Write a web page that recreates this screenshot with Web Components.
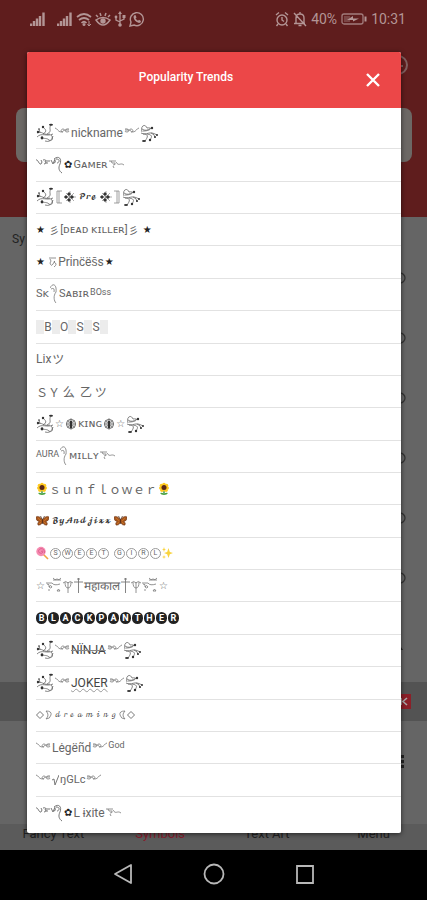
<!DOCTYPE html>
<html lang="en">
<head>
<meta charset="utf-8">
<meta name="viewport" content="width=device-width, initial-scale=1">
<title>Popularity Trends</title>
<style>
body{margin:0;background:#000;font-family:Roboto,"Liberation Sans",sans-serif}
</style>
</head>
<body>
<trends-screen></trends-screen>
<script>
const GLYPHS = {
  swirlLeft: [18,20,'<g fill="none" stroke="#666" stroke-width=".8"><path d="M1 10C5 7 8 13 14 11M1 14C6 9 10 14 17 11M4 10Q3 6 3 6M7 11C12 8 9 6 7 4M11 11C17 8 12 6 15 2M6 13C6 17 10 14 13 17C16 19 18 15 15 12M9 18Q15 20 17 13"/></g><g fill="#333"><circle cx="2" cy="9" r="1.2"/><circle cx="7" cy="4" r="1.2"/><ellipse cx="15" cy="1.8" rx="2" ry="1"/><circle cx="6" cy="15" r="1.4"/><circle cx="3" cy="6" r=".8"/></g>'],
  swirlRight: [18,20,'<g fill="none" stroke="#666" stroke-width=".8"><path d="M2 9C0 3 5 0 7 5C13 4 11 8 3 8M1 10C7 13 9 7 17 12M3 11C9 11 8 14 5 18M7 11C14 12 11 15 10 17M11 10Q15 11 15 15M2 6Q6 9 11 5"/></g><g fill="#333"><ellipse cx="4" cy="18" rx="2" ry="1.1"/><circle cx="10" cy="17" r="1.2"/><circle cx="15" cy="14" r="1"/><circle cx="17" cy="12" r="1"/><circle cx="12" cy="5" r="1.2"/></g>'],
  wingLeft: [15,16,'<g fill="none" stroke="#777" stroke-width=".8"><path d="M0 3C2 3 3 7 6 7C9 7 10 4 8 4C6 4 5 7 8 7M14 4C10 3 9 7 12 7Q14 7 14 6M9 5H14"/></g>'],
  wingRight: [15,16,'<g fill="none" stroke="#777" stroke-width=".8"><path d="M15 3C13 3 12 7 9 7C6 7 5 4 7 4C9 4 10 7 7 7M1 4C5 3 6 7 3 7Q1 7 1 6M6 5H1"/></g>'],
  plume: [27,20,'<g fill="none" stroke="#666" stroke-width=".9"><path d="M0 5C2 4 3 10 5 9Q7 7 5 5M7 5Q11 4 9 7Q12 8 8 9M11 5V9M12 6H14M15 5L17 9L19 4M19 5Q20 8 18 8M18 4C23 0 26 4 24 9C22 13 23 16 26 18M20 4C25 4 23 8 21 8"/></g>'],
  tail: [15,16,'<g fill="none" stroke="#777" stroke-width=".8"><path d="M0 4H7M2 4Q2 7 6 6Q7 8 4 8M4 9L5 11M7 5C10 10 11 5 15 8"/></g>'],
  hook: [8,22,'<g fill="none" stroke="#777" stroke-width=".8"><path d="M0 5C3 -1 7 2 6 9C3 13 4 18 6 20M1 6Q5 4 4 9"/></g>'],
  bracketLeft: [8,16,'<path d="M7 2H2V14H7M4 2V14" fill="none" stroke="#888" stroke-width=".8"/>'],
  bracketRight: [8,16,'<path d="M1 2H6V14H1M4 2V14" fill="none" stroke="#888" stroke-width=".8"/>'],
  burst: [12,14,'<g stroke="#777" stroke-width=".6"><path d="M6 1V13M0 7H12M2 3L10 11M10 3L2 11"/></g><g fill="#333"><path d="M5 2L7 4L5 6L3 4zM5 8L7 10L5 12L3 10zM2 5L4 7L2 9L0 7zM8 5L10 7L8 9L6 7z"/></g>'],
  wheel: [12,14,'<circle cx="6" cy="7" r="4.6" fill="#ccc" stroke="#777"/><path d="M6 1V13M1 7H11M2 3L10 11M10 3L2 11" stroke="#777" stroke-width=".7"/><path d="M6 4V11" stroke="#333" stroke-width="2"/>'],
  om: [8,12,'<path d="M0 2H7M1 3Q3 5 1 7Q2 11 4 8Q7 3 5 6Q9 8 5 11" fill="none" stroke="#777" stroke-width=".8"/>'],
  sunflower: [12,14,'<path d="M6 7V12" stroke="#3a9142" stroke-width="1.4"/><path d="M2 11Q4 10 6 12Q8 10 10 11Q9 13 6 13Q3 13 2 11" fill="#49a33e"/><g fill="#ffc91f"><circle cx="6" cy="2.5" r="1.8"/><circle cx="3.5" cy="3.5" r="1.8"/><circle cx="8.5" cy="3.5" r="1.8"/><circle cx="2.8" cy="6" r="1.8"/><circle cx="9.2" cy="6" r="1.8"/><circle cx="4" cy="8.2" r="1.8"/><circle cx="8" cy="8.2" r="1.8"/></g><circle cx="6" cy="5.6" r="2.5" fill="#5b2816"/>'],
  butterfly: [13,14,'<path d="M6.5 6C4 2 1 2 0 3Q0 7 3 7.5Q1 9 2 11Q5 12 6.5 8Q8 12 11 11Q12 9 10 7.5Q13 7 13 3C12 2 9 2 6.5 6" fill="#a9571d" stroke="#6b3518" stroke-width=".6"/><path d="M2 4L5 7M11 4L8 7M3 10L5 8M10 10L8 8" stroke="#d07d28" stroke-width=".7"/><path d="M6.5 5V10M6 5L4.5 2M7 5L8.5 2" stroke="#402010" stroke-width=".7"/>'],
  lollipop: [13,14,'<path d="M7 8L12 13" stroke="#f1a344" stroke-width="1.6"/><circle cx="5" cy="5.5" r="4.7" fill="#f58bb0"/><path d="M5 5.5Q7 4 7 6Q6 8 3.5 7Q1 4 5 2.5Q9 3 8.5 7" fill="none" stroke="#d95789" stroke-width=".8"/>'],
  sparkles: [11,14,'<g fill="#f9d33c"><path d="M6.5 2L7.8 6L11 7L7.8 8.2L6.5 12L5.2 8.2L2 7L5.2 6z"/><path d="M2 1L2.6 3L4 3.5L2.6 4L2 6L1.4 4L0 3.5L1.4 3zM2 9L2.5 10.5L4 11L2.5 11.5L2 13L1.5 11.5L0 11L1.5 10.5z"/></g>'],
  crest: [16,20,'<g fill="none" stroke="#777" stroke-width=".8"><path d="M0 7H6M1 8Q4 8 3 11Q5 8 6 11Q5 13 3 11M3 13V15M7 2Q9 5 11 3Q13 5 15 2M7 4H15M6 7Q8 10 14 8M11 15L12.5 13L14 15z"/></g>'],
  trident: [10,18,'<path d="M0 6Q3 3 5 6Q7 3 10 6M2 5Q2 11 5 11Q8 11 8 5M5 5V16" fill="none" stroke="#777" stroke-width=".8"/>'],
  dagger: [9,18,'<path d="M4.500 1V16M0 5H9M3 2H6" fill="none" stroke="#777" stroke-width=".9"/>'],
  radical: [7,16,'<path d="M0 8L2 7L3 13L7 3" fill="none" stroke="#777"/>'],
  moonLeft: [7,12,'<path d="M1 2Q7 2 6 6Q5 10 1 10Q5 6 1 2z" fill="none" stroke="#777" stroke-width=".8"/>'],
  moonRight: [7,12,'<path d="M6 2Q0 2 1 6Q2 10 6 10Q2 6 6 2z" fill="none" stroke="#777" stroke-width=".8"/>'],
  diamond: [8,12,'<path d="M4 2.500L7.500 6L4 9.500L.5 6z" fill="none" stroke="#777"/>'],
  signal: [16,16,'<path d="M1 15V12.500M4 15V10M7 15V7.500M10 15V5M13.500 15V1.500" stroke="currentColor" stroke-width="2.400"/>'],
  wifi: [16,16,'<g fill="none" stroke="currentColor" stroke-width="1.7"><path d="M1 6Q8 0 15 6M3 9Q8 5 13 9M5.500 12Q8 9.500 10.500 12"/></g><circle cx="8" cy="13.500" r="1.500" fill="currentColor"/><path d="M13 10V15M11.500 13L13 15L15 13" stroke="currentColor" fill="none"/>'],
  eye: [16,16,'<g fill="none" stroke="currentColor" stroke-width="1.5"><path d="M1 9Q8 4 15 9Q8 19 1 9zM3 6L1 4M6 5L5 2M10 5L11 2M13 6L15 4"/></g><circle cx="8" cy="10" r="2.700" fill="currentColor"/>'],
  usb: [12,16,'<path d="M6 2V14M2 6V9L6 11M10 5V8L6 10" fill="none" stroke="currentColor" stroke-width="1.300"/><path d="M6 0L8 3H4z" fill="currentColor"/><circle cx="6" cy="14" r="1.800" fill="currentColor"/><circle cx="2" cy="6" r="1.400" fill="currentColor"/><path d="M8.500 4H11.500V7H8.500z" fill="currentColor"/>'],
  whatsapp: [16,16,'<path d="M1 15L2 11A6.500 6.500 0 1 1 5 14z" fill="none" stroke="currentColor" stroke-width="1.400"/><path d="M5 4.500L6.500 4L7.500 6.500L6.500 7.500Q7.500 9 9 9.800L10 8.800L12 10Q12 12 10 12Q5 10.500 4.500 6z" fill="currentColor"/>'],
  alarm: [14,16,'<g fill="none" stroke="currentColor" stroke-width="1.400"><circle cx="7" cy="9" r="5"/><path d="M7 6V9L9 10.500M1 4L4 1.500M13 4L10 1.500M3 13L1.500 15M11 13L12.500 15"/></g>'],
  mute: [14,16,'<g fill="none" stroke="currentColor" stroke-width="1.400"><path d="M3 12V7Q3 3 7 3Q11 3 11 7V12M1 12.500H12M7 1V3M5.500 14.500H8.500M1 2L13 15"/></g>'],
  battery: [26,16,'<rect x="1" y="3" width="21" height="10" rx="2" fill="none" stroke="currentColor" stroke-width="1.300" opacity=".8"/><path d="M3 5H9V11H3z" fill="currentColor" opacity=".35"/><path d="M6 9L12 5V7.500H18L12 10.500V9z" fill="currentColor"/><path d="M23.500 5.500H25.500V10.500H23.500z" fill="currentColor"/>'],
  close: [16,16,'<path d="M2 2L14 14M14 2L2 14" stroke="#fff" stroke-width="2.400"/>'],
  back: [20,22,'<path d="M18 2V20L2 11z" fill="none" stroke="#b8b8b8" stroke-width="1.800" stroke-linejoin="round"/>'],
  home: [22,22,'<circle cx="11" cy="11" r="9.500" fill="none" stroke="#b8b8b8" stroke-width="1.800"/>'],
  recent: [20,22,'<path d="M2 3H18V20H2z" fill="none" stroke="#b8b8b8" stroke-width="1.800"/>'],
  clock: [22,22,'<g fill="none" stroke="#806060" stroke-width="2"><circle cx="11" cy="11" r="9"/><path d="M11 5V12H16"/></g>'],
  copy: [12,14,'<circle cx="6" cy="7" r="5" fill="none" stroke="#333" stroke-width="1.300"/>'],
  corner: [12,12,'<path d="M4 1L11 11H1z" fill="#222"/>'],
  more: [4,16,'<path d="M1 1H4V4H1zM1 6H4V9H1zM1 11H4V14H1z" fill="#222"/>'],
  adclose: [15,15,'<path d="M0 0H15V15H0z" fill="#8b1f28"/><path d="M11 4L7 7.500L11 11M5 4V11" fill="none" stroke="#aaa" stroke-width="1.600"/>']
};

class SymbolGlyph extends HTMLElement {
  connectedCallback() {
    if (this.shadowRoot) return;
    const [w, h, art] = GLYPHS[this.getAttribute('name')];
    this.attachShadow({mode:'open'}).innerHTML =
      `<style>:host{display:inline-flex;flex:none}svg{display:block}</style><svg aria-hidden="true" width="${w}" height="${h}" viewBox="0 0 ${w} ${h}">${art}</svg>`;
  }
}
customElements.define('symbol-glyph', SymbolGlyph);

class TrendRow extends HTMLElement {
  constructor() {
    super();
    this.attachShadow({mode:'open'}).innerHTML = `<style>
:host{display:flex;align-items:center;gap:1px;min-width:0;box-sizing:border-box;border-bottom:1px solid #e2e2e2;color:#666;font-size:12px;line-height:16px;white-space:pre}
:host(:last-child){border-bottom:0}
::slotted(.caps){font:11px/16px Roboto,"DejaVu Sans",sans-serif}
::slotted(.sup){font-size:9px;line-height:16px;align-self:flex-start;padding-top:5px}
::slotted(.star){font:10px/16px "DejaVu Sans",sans-serif;color:#222}
::slotted(.hollow){font:10px/16px "DejaVu Sans",sans-serif}
::slotted(.cjk){font:12px/16px "Noto Sans CJK JP",sans-serif}
::slotted(.kana){font:10px/16px "Noto Sans CJK JP",sans-serif}
::slotted(.script){font:7px/16px "DejaVu Math TeX Gyre","DejaVu Serif",serif;color:#333;padding:0 2px}
::slotted(.shade){background:#ececec;width:8px;height:14px}
::slotted(.cell){width:6px;display:flex;justify-content:center}
::slotted(.disc){box-sizing:border-box;width:11px;height:12px;border-radius:6px;background:#222;color:#fff;font-size:9px;line-height:12px;font-weight:700;text-align:center}
::slotted(.ring){box-sizing:border-box;width:11px;height:11px;border-radius:6px;border:1px solid #999;font-size:7px;line-height:9px;text-align:center}
::slotted(.gap){width:3px}
::slotted(.struck){text-decoration:line-through #888;color:#444}
::slotted(.wavy){text-decoration:underline wavy #999 1px;color:#444}
</style><slot></slot>`;
    this.setAttribute('role','listitem');
  }
}
customElements.define('trend-row', TrendRow);

class StatusBar extends HTMLElement {
  constructor() {
    super();
    this.attachShadow({mode:'open'}).innerHTML = `<style>
:host{display:flex;justify-content:space-between;align-items:center;height:38px;box-sizing:border-box;padding:0 21px 0 30px;color:#b39595;font-size:14px}
div{display:flex;align-items:center;gap:4px}.left{gap:3px}.second{margin-left:8px}
</style><div class="left"><symbol-glyph name="signal"></symbol-glyph><symbol-glyph class="second" name="signal"></symbol-glyph><symbol-glyph name="wifi"></symbol-glyph><symbol-glyph name="eye"></symbol-glyph><symbol-glyph name="usb"></symbol-glyph><symbol-glyph name="whatsapp"></symbol-glyph></div>
<div><symbol-glyph name="alarm"></symbol-glyph><symbol-glyph name="mute"></symbol-glyph><span>40%</span><symbol-glyph name="battery"></symbol-glyph><span>10:31</span></div>`;
  }
}
customElements.define('status-bar', StatusBar);

class AppBackdrop extends HTMLElement {
  constructor() {
    super();
    this.attachShadow({mode:'open'}).innerHTML = `<style>
:host{display:flex;flex-direction:column;background:#656565;min-height:0;overflow:hidden}
header{background:#5f1d1d;height:217px;flex:none}
.tools{display:flex;justify-content:flex-end;padding:16px 18px 0}
.field{height:54px;margin:32px 15px 0 16px;border-radius:8px;background:#6c6865}
h2{margin:0;padding:14px 12px 0;height:17px;font-weight:400;font-size:12px;line-height:16px;color:#222}
.item{height:60px;flex:none;display:flex;align-items:center;justify-content:flex-end;padding-right:21px;box-sizing:border-box}
.rest{height:74px;flex:none;display:flex;align-items:center;justify-content:flex-end;padding-right:23px;box-sizing:border-box}
.ad{height:39px;flex:none;background:#535353;display:flex;justify-content:flex-end;align-items:center;padding-right:16px}
.fill{flex:1;display:flex;justify-content:flex-end;padding:33px 23px 0}
nav{display:grid;grid-template-columns:repeat(4,1fr);height:26px;background:#5b5b5b;text-align:center;font-size:13px;line-height:20px}
a{color:#222;text-decoration:none}a.on{color:#861c2c}
</style><header><status-bar></status-bar><div class="tools"><symbol-glyph name="clock"></symbol-glyph></div><div class="field"></div></header>
<h2>Sy</h2>${'<div class="item"><symbol-glyph name="copy"></symbol-glyph></div>'.repeat(6)}<div class="rest"><symbol-glyph name="corner"></symbol-glyph></div><div class="ad"><symbol-glyph name="adclose"></symbol-glyph></div><div class="fill"><symbol-glyph name="more"></symbol-glyph></div>
<nav><a href="#fancy">Fancy Text</a><a class="on" href="#symbols">Symbols</a><a href="#art">Text Art</a><a href="#menu">Menu</a></nav>`;
  }
}
customElements.define('app-backdrop', AppBackdrop);

class TrendsDialog extends HTMLElement {
  constructor() {
    super();
    this.attachShadow({mode:'open'}).innerHTML = `<style>
:host{display:flex;flex-direction:column;background:#fff;border-radius:2px;box-shadow:0 1px 5px #0009;overflow:hidden}
header{display:grid;grid-template-columns:56px 1fr 56px;align-items:center;height:56px;flex:none;background:#ec4748;color:#fff}
h1{grid-column:2;margin:0;padding:0 56px 6px 0;text-align:center;font-size:12px;line-height:16px;font-weight:500}
button{border:0;padding:0;background:none;height:56px;display:grid;place-items:center}
.list{flex:1;display:grid;grid-auto-rows:1fr;padding:9px 0 4px 9px;min-height:0}
</style><header><h1><slot name="title"></slot></h1><button type="button" aria-label="Close"><symbol-glyph name="close"></symbol-glyph></button></header><div class="list" role="list"><slot></slot></div>`;
  }
}
customElements.define('trends-dialog', TrendsDialog);

class NavBar extends HTMLElement {
  constructor() {
    super();
    this.attachShadow({mode:'open'}).innerHTML = `<style>
:host{display:flex;justify-content:center;gap:70px;align-items:center;height:50px;background:#000}
button{border:0;padding:0;background:none}
</style><button type="button" aria-label="Back"><symbol-glyph name="back"></symbol-glyph></button><button type="button" aria-label="Home"><symbol-glyph name="home"></symbol-glyph></button><button type="button" aria-label="Recent apps"><symbol-glyph name="recent"></symbol-glyph></button>`;
  }
}
customElements.define('nav-bar', NavBar);

const g = n => `<symbol-glyph name="${n}"></symbol-glyph>`;
const t = (c, s) => `<span class="${c}">${s}</span>`;
const each = (c, s) => [...s].map(ch => ch === ' ' ? t('gap','') : t(c, ch)).join('');
const shaded = s => t('shade','') + [...s].map(ch => t('cell', ch) + t('shade','')).join('');
const framed = s => g('swirlLeft') + s + g('swirlRight');
const winged = s => g('wingLeft') + s + g('wingRight');
const rows = [
  framed(winged(t('', 'nickname'))),
  g('plume') + t('star','✿') + t('caps','Gᴀᴍᴇʀ') + g('tail'),
  framed(g('bracketLeft') + g('burst') + t('script','𝓟𝓻𝓮') + g('burst') + g('bracketRight')),
  t('star','★ ') + t('kana','彡') + t('caps','[ᴅᴇᴀᴅ ᴋɪʟʟᴇʀ]') + t('kana','彡') + t('star',' ★'),
  t('star','★ ') + g('om') + t('','Pri̇nc̈ës̄s') + t('star','★'),
  t('caps','Sᴋ') + g('hook') + t('caps','Sᴀʙɪʀ') + t('sup','BOss'),
  shaded('BOSS'),
  '<span>Lix</span>' + t('cjk','ツ'),
  t('cjk','ＳＹ 么  乙 ツ'),
  framed(t('hollow','☆') + g('wheel') + t('caps','ᴋɪɴɢ') + g('wheel') + t('hollow','☆')),
  t('sup','AURA') + g('hook') + t('caps','ᴍɪʟʟʏ') + g('tail'),
  g('sunflower') + t('cjk','ｓｕｎｆｌｏｗｅｒ') + g('sunflower'),
  g('butterfly') + t('script','𝓑𝔂𝓐𝓷𝓭𝓳𝓲𝔁𝔁') + g('butterfly'),
  g('lollipop') + each('ring','SWEET GIRL') + g('sparkles'),
  t('hollow','☆') + g('crest') + g('trident') + g('dagger') + t('','महाकाल') + g('dagger') + g('trident') + g('crest') + t('hollow','☆'),
  each('disc','BLACKPANTHER'),
  framed(winged(t('struck','NÏNJA'))),
  framed(winged(t('wavy','JOKER'))),
  g('diamond') + g('moonLeft') + t('script','𝒹 𝓇 ℯ 𝒶 𝓂 𝒾 𝓃 ℊ') + g('moonRight') + g('diamond'),
  winged(t('','Lėgëñd')) + t('sup','God'),
  winged(g('radical') + t('caps','ŋGLc')),
  g('plume') + t('star','✿') + t('','L ɨxite') + g('tail')
];

class TrendsScreen extends HTMLElement {
  constructor() {
    super();
    this.attachShadow({mode:'open'}).innerHTML = `<style>
:host{display:grid;grid-template-rows:minmax(0,1fr) auto;height:100vh;position:relative}
trends-dialog{position:absolute;inset:52px 26px 67px 27px}
</style><app-backdrop></app-backdrop><nav-bar></nav-bar><trends-dialog role="dialog" aria-label="Popularity Trends"><span slot="title">Popularity Trends</span></trends-dialog>`;
    this.shadowRoot.querySelector('trends-dialog').insertAdjacentHTML('beforeend', rows.map(r => `<trend-row>${r}</trend-row>`).join(''));
  }
}
customElements.define('trends-screen', TrendsScreen);
</script>
</body>
</html>
